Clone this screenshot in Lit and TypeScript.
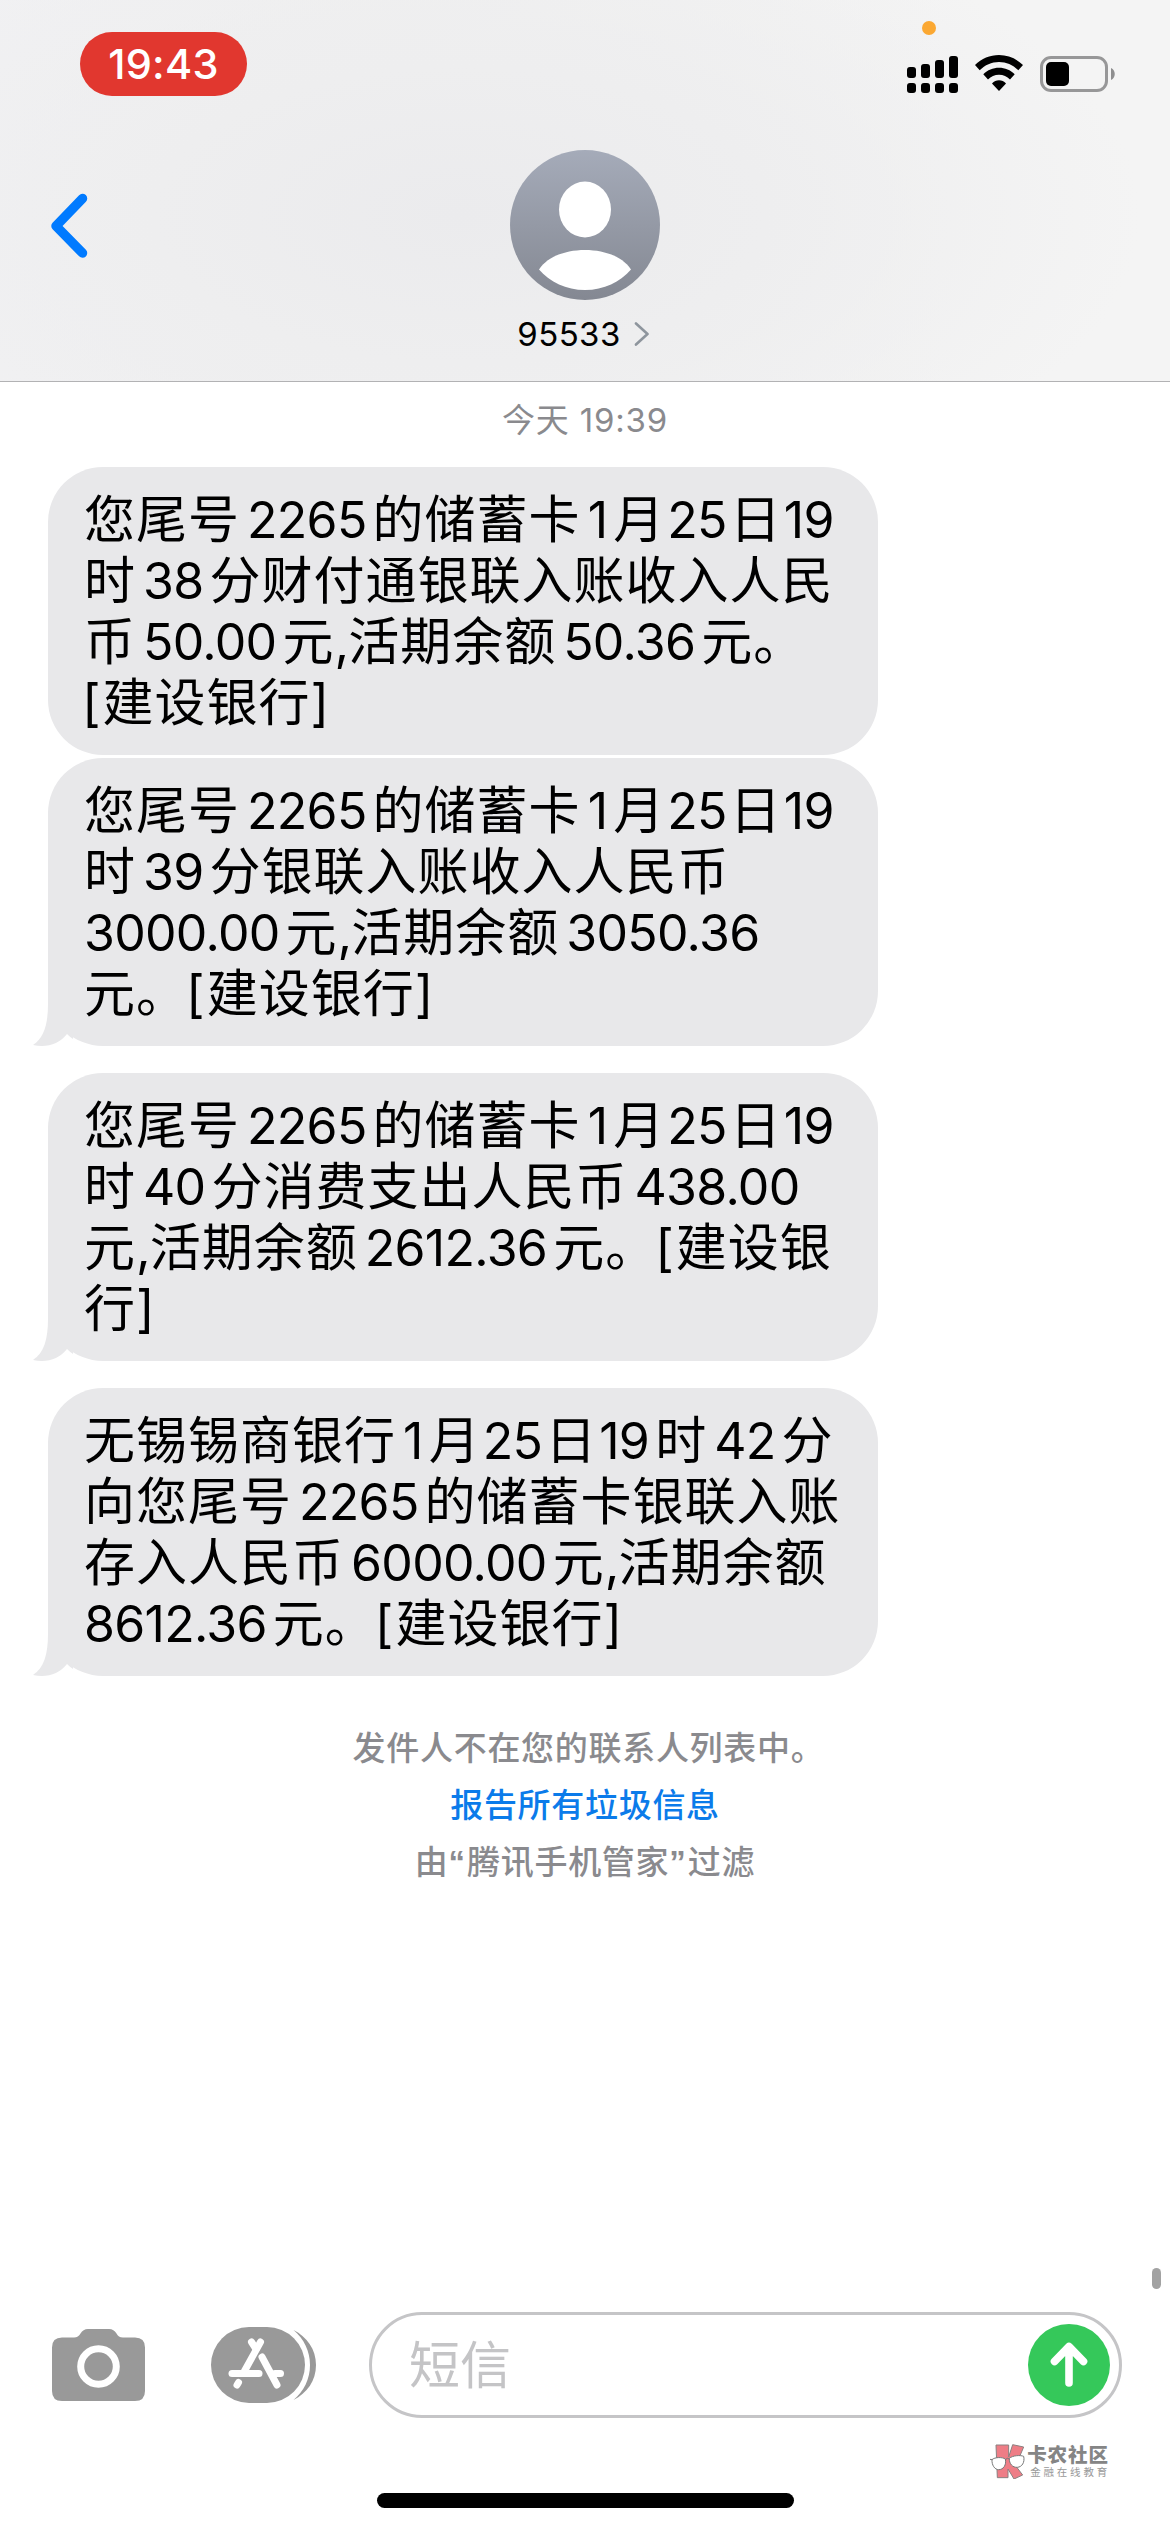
import { LitElement, html, css, svg } from "lit";
import { customElement, property } from "lit/decorators.js";
import { classMap } from "lit/directives/class-map.js";

interface Message {
  lines: string[];
  tail: boolean;
}

const MESSAGES: Message[] = [
  {
    tail: false,
    lines: [
      "您尾号2265的储蓄卡1月25日19",
      "时38分财付通银联入账收入人民",
      "币50.00元,活期余额50.36元。",
      "[建设银行]",
    ],
  },
  {
    tail: true,
    lines: [
      "您尾号2265的储蓄卡1月25日19",
      "时39分银联入账收入人民币",
      "3000.00元,活期余额3050.36",
      "元。[建设银行]",
    ],
  },
  {
    tail: true,
    lines: [
      "您尾号2265的储蓄卡1月25日19",
      "时40分消费支出人民币438.00",
      "元,活期余额2612.36元。[建设银",
      "行]",
    ],
  },
  {
    tail: true,
    lines: [
      "无锡锡商银行1月25日19时42分",
      "向您尾号2265的储蓄卡银联入账",
      "存入人民币6000.00元,活期余额",
      "8612.36元。[建设银行]",
    ],
  },
];

@customElement("message-bubble")
export class MessageBubble extends LitElement {
  @property({ attribute: false }) lines: string[] = [];
  @property({ type: Boolean }) tail = false;

  static styles = css`
    :host {
      display: block;
      position: relative;
      box-sizing: border-box;
      width: 830px;
      height: 288px;
      padding: 22px 36px;
      border-radius: 55px;
      background: #e8e8ea;
      color: #000;
      font: 400 51px/61px Inter, "Noto Sans CJK SC", sans-serif;
      letter-spacing: 1px;
      white-space: nowrap;
    }
    .line {
      height: 61px;
    }
    .num {
      font-size: 50px;
      letter-spacing: -0.7px;
      margin: 0 6px 0 7px;
    }
    .num.tight {
      margin-left: 2px;
    }
    .num.day {
      margin-right: 3px;
    }
    .num.lead {
      margin-left: 0;
    }
    .mark {
      letter-spacing: -1px;
    }
    .bracket {
      margin-left: -2px;
      letter-spacing: 2px;
    }
    .tail {
      position: absolute;
      left: -15px;
      bottom: 0;
      width: 40px;
      height: 60px;
    }
  `;

  private renderRun(run: string, i: number, runs: string[]) {
    if (/^\d/.test(run)) {
      const classes = {
        num: true,
        lead: i === 0,
        tight: i > 0 && /[月日]$/.test(runs[i - 1]),
        day: /^日/.test(runs[i + 1] ?? ""),
      };
      return html`<span class=${classMap(classes)}>${run}</span>`;
    }
    if (run === ",") return html`<span class="mark">,</span>`;
    if (run === "[") return html`<span class="bracket">[</span>`;
    return run;
  }

  private renderLine(line: string) {
    const runs = line.split(/([\d.]+|,|\[)/).filter((run) => run !== "");
    return html`<div class="line">${runs.map((run, i) => this.renderRun(run, i, runs))}</div>`;
  }

  render() {
    return html`${this.lines.map((line) => this.renderLine(line))}
    ${this.tail
      ? html`<svg class="tail" viewBox="0 0 40 60">
          <path fill="#fff" d="M15 20 V60 H40 Q34 57 25 40 Z" />
          <path fill="#e8e8ea" d="M15 0 V18 C15 38 11 52 0 59 C14 62 26 58 34 48 C36 50 38 51.500 40 53 V0 Z" />
        </svg>`
      : ""}`;
  }
}

@customElement("app-root")
export class AppRoot extends LitElement {
  static styles = css`
    :host {
      display: flex;
      flex-direction: column;
      position: relative;
      width: 1170px;
      height: 2532px;
      overflow: hidden;
      background: #fff;
      font-family: Inter, "Noto Sans CJK SC", sans-serif;
    }
    svg {
      display: block;
    }
    .header {
      box-sizing: border-box;
      height: 382px;
      border-bottom: 1px solid #b2b2b4;
      background: radial-gradient(ellipse 680px 330px at 460px 215px, #ebebed 0%, #eeeeef 45%, rgba(240, 240, 241, 0) 100%),
        linear-gradient(90deg, #f1f1f3 0, #f0f0f0 400px, #f4f4f4 950px, #f4f4f4 100%);
    }
    .status {
      display: flex;
      justify-content: space-between;
      height: 150px;
      box-sizing: border-box;
      padding: 32px 54px 0 80px;
    }
    .clock {
      width: 167px;
      height: 64px;
      border-radius: 32px;
      background: #e1372f;
      color: #fff;
      font-size: 41.5px;
      font-weight: 500;
      line-height: 64px;
      text-align: center;
      letter-spacing: 0.3px;
    }
    .indicators {
      display: flex;
      align-items: flex-start;
      gap: 17px;
      padding-top: 23px;
      position: relative;
    }
    .mic {
      position: absolute;
      left: 15px;
      top: -11px;
      width: 14px;
      height: 14px;
      border-radius: 50%;
      background: #fba832;
    }
    .battery {
      margin-top: 1px;
    }
    .nav {
      display: grid;
      grid-template-columns: 1fr auto 1fr;
    }
    .back {
      padding: 43px 0 0 48px;
    }
    .contact {
      display: flex;
      flex-direction: column;
      align-items: center;
    }
    .name {
      display: flex;
      align-items: center;
      gap: 13px;
      padding: 14px 3px 0 0;
      height: 40px;
      font-size: 33px;
      letter-spacing: 0.4px;
      line-height: 40px;
    }
    .thread {
      display: flex;
      flex-direction: column;
      flex: 1;
      padding: 0 48px;
    }
    .stamp {
      height: 85px;
      padding-top: 17px;
      box-sizing: border-box;
      color: #8a8a8e;
      font-size: 33px;
      line-height: 42px;
      text-align: center;
      letter-spacing: 0.8px;
    }
    .gap-close {
      margin-top: 3px;
    }
    .gap-wide {
      margin-top: 27px;
    }
    .notes {
      display: flex;
      flex-direction: column;
      align-items: center;
      padding-top: 44px;
      color: #8a8a8e;
      font-size: 33px;
      font-weight: 500;
      letter-spacing: 0.7px;
      line-height: 57px;
    }
    .sender {
      padding-left: 7px;
    }
    .quote {
      font-family: "Liberation Sans", sans-serif;
      font-weight: 700;
      letter-spacing: 2px;
    }
    .report {
      color: #0b7bea;
      font-weight: 500;
    }
    .composer {
      display: flex;
      align-items: center;
      height: 106px;
      padding: 0 48px 0 52px;
    }
    .apps {
      margin-left: 66px;
    }
    .field {
      display: flex;
      align-items: center;
      justify-content: space-between;
      box-sizing: border-box;
      width: 753px;
      height: 106px;
      margin-left: 53px;
      padding: 0 9px 0 37px;
      border: 3px solid #c5c5c7;
      border-radius: 53px;
      color: #c4c4c6;
      font-size: 51px;
      line-height: 61px;
    }
    .footer {
      display: flex;
      flex-direction: column;
      height: 114px;
    }
    .brand {
      display: flex;
      align-self: flex-end;
      gap: 2px;
      padding: 25px 60px 0 0;
      height: 40px;
    }
    .brand-text {
      font-family: "Noto Sans CJK SC", sans-serif;
      color: #858585;
      white-space: nowrap;
    }
    .brand-name {
      height: 22px;
      font-size: 19.5px;
      font-weight: 900;
      line-height: 22px;
      letter-spacing: 0.9px;
    }
    .brand-sub {
      height: 14px;
      padding-left: 3px;
      font-size: 10.5px;
      line-height: 14px;
      letter-spacing: 2.8px;
      color: #999;
    }
    .home {
      width: 417px;
      height: 15px;
      margin: 10px auto 0;
      border-radius: 8px;
      background: #000;
    }
    .scrollbar {
      position: absolute;
      left: 1152px;
      top: 2268px;
      width: 9px;
      height: 21px;
      border-radius: 4.5px;
      background: #a2a2a2;
    }
  `;

  private renderSignal() {
    const tops = [12, 9, 5, 1];
    return html`<svg width="51" height="38" viewBox="0 0 51 38">
      ${tops.map(
        (top, i) => svg`
          <rect x=${i * 14} y=${top} width="9" height=${23 - top} rx="3" />
          <rect x=${i * 14} y="28" width="9" height="10" rx="3" />`
      )}
    </svg>`;
  }

  private renderHeader() {
    return html`<header class="header">
      <div class="status">
        <div class="clock">19:43</div>
        <div class="indicators">
          <span class="mic"></span>
          ${this.renderSignal()}
          <svg width="48" height="37" viewBox="0 0 48 37">
            <path d="M24 0 C33 0 41.500 3.600 48 10 L43.300 15.300 C38 10 31.500 7 24 7 C16.500 7 10 10 4.700 15.300 L0 10 C6.500 3.600 15 0 24 0 Z" />
            <path d="M24 12.700 C30 12.700 35.500 15 39.700 19.200 L35 24.500 C32 21.500 28.300 19.700 24 19.700 C19.700 19.700 16 21.500 13 24.500 L8.300 19.200 C12.500 15 18 12.700 24 12.700 Z" />
            <path d="M24 25.300 C26.600 25.300 29 26.400 31 28.400 L24 36 L17 28.400 C19 26.400 21.400 25.300 24 25.300 Z" />
          </svg>
          <svg class="battery" width="76" height="36" viewBox="0 0 76 36">
            <rect x="1.500" y="1.500" width="65" height="33" rx="9.500" fill="none" stroke="#979798" stroke-width="3" />
            <rect x="6" y="6" width="23" height="24" rx="5" />
            <path d="M71 12 C76 14 76 22 71 24 Z" fill="#8e8e8f" />
          </svg>
        </div>
      </div>
      <div class="nav">
        <div class="back">
          <svg width="42" height="66" viewBox="0 0 42 66">
            <path d="M34.500 5.500 L8 33 L34.500 60" fill="none" stroke="#007aff" stroke-width="9.500" stroke-linecap="round" stroke-linejoin="round" />
          </svg>
        </div>
        <div class="contact">
          <svg width="150" height="150" viewBox="0 0 150 150">
            <defs>
              <linearGradient id="shade" x1="0" y1="0" x2="0" y2="1">
                <stop offset="0" stop-color="#a5abb9" />
                <stop offset="1" stop-color="#848892" />
              </linearGradient>
            </defs>
            <circle cx="75" cy="75" r="75" fill="url(#shade)" />
            <ellipse cx="75" cy="59.500" rx="26" ry="28" fill="#fff" />
            <path d="M29 119.500 C37 107 55 100 75 100 C95 100 113 107 121 119.500 C110 132 94 140 75 140 C56 140 40 132 29 119.500 Z" fill="#fff" />
          </svg>
          <div class="name">
            <span>95533</span>
            <svg width="16" height="24" viewBox="0 0 16 24">
              <path d="M2 1.500 L13.500 12 L2 22.500" fill="none" stroke="#8e959d" stroke-width="2.600" stroke-linecap="round" stroke-linejoin="round" />
            </svg>
          </div>
        </div>
        <div></div>
      </div>
    </header>`;
  }

  private renderComposer() {
    return html`<div class="composer">
      <svg width="93" height="72" viewBox="0 0 93 72">
        <path
          fill="#999"
          d="M10 8.500 H22 C25 8.500 27 7 28.500 4.500 C30.500 1.500 32.500 0 36 0 H57 C60.500 0 62.500 1.500 64.500 4.500 C66 7 67.500 8.500 71 8.500 H83 Q93 8.500 93 18.500 V62 Q93 72 83 72 H10 Q0 72 0 62 V18.500 Q0 8.500 10 8.500 Z"
        />
        <circle cx="46.500" cy="37.500" r="17.800" fill="#999" stroke="#fff" stroke-width="7" />
      </svg>
      <svg class="apps" width="105" height="76" viewBox="0 0 105 76">
        <rect width="94" height="76" rx="38" fill="#999" />
        <path d="M82.500 3 C96 10 105 22 105 38 C105 54 96 66 82.500 73 C93 64 99 52 99 38 C99 24 93 12 82.500 3 Z" fill="#999" />
        <g stroke="#fff" stroke-width="7" stroke-linecap="round" fill="none">
          <path d="M49.500 15 L33.500 44" />
          <path d="M40.500 15 L45 22" />
          <path d="M21 46.500 H48" />
          <path d="M64 46.500 H69.500" />
          <path d="M51 30 L66 58" />
          <path d="M27.500 55.500 L26 58" />
        </g>
      </svg>
      <div class="field">
        <span>短信</span>
        <svg width="82" height="82" viewBox="0 0 82 82">
          <circle cx="41" cy="41" r="41" fill="#35c85a" />
          <path d="M41 24 V59 M26.500 37.500 L41 22.500 L55.500 37.500" fill="none" stroke="#fff" stroke-width="7.600" stroke-linecap="round" stroke-linejoin="round" />
        </svg>
      </div>
    </div>`;
  }

  private renderBrand() {
    return html`<div class="brand">
      <svg width="35" height="36" viewBox="0 0 105 108">
        <g fill="#ee7d86" stroke="#8a8080" stroke-width="3" stroke-linejoin="round">
          <path d="M18 6 H56 V42 L68 5 L101 12 L84 52 L72 62 L98 96 L72 108 L54 78 V104 H22 Z" />
        </g>
        <g fill="#fff" stroke="#777" stroke-width="3">
          <path d="M6 50 C14 42 38 42 46 48 C50 66 40 80 26 80 C14 80 5 66 6 50 Z" />
          <path d="M58 46 C68 37 92 36 101 40 C105 58 96 72 82 73 C68 74 57 62 58 46 Z" />
          <path d="M46 50 Q52 43 58 48 M6 50 L0 49" fill="none" />
        </g>
      </svg>
      <div class="brand-text">
        <div class="brand-name">卡农社区</div>
        <div class="brand-sub">金融在线教育</div>
      </div>
    </div>`;
  }

  render() {
    return html`
      ${this.renderHeader()}
      <main class="thread">
        <div class="stamp">今天 19:39</div>
        ${MESSAGES.map(
          (m, i) => html`<message-bubble
            class=${i === 0 ? "" : i === 1 ? "gap-close" : "gap-wide"}
            .lines=${m.lines}
            ?tail=${m.tail}
          ></message-bubble>`
        )}
        <div class="notes">
          <div class="sender">发件人不在您的联系人列表中。</div>
          <div class="report">报告所有垃圾信息</div>
          <div>由<span class="quote">“</span>腾讯手机管家<span class="quote">”</span>过滤</div>
        </div>
      </main>
      ${this.renderComposer()}
      <footer class="footer">
        ${this.renderBrand()}
        <div class="home"></div>
      </footer>
      <div class="scrollbar"></div>
    `;
  }
}
